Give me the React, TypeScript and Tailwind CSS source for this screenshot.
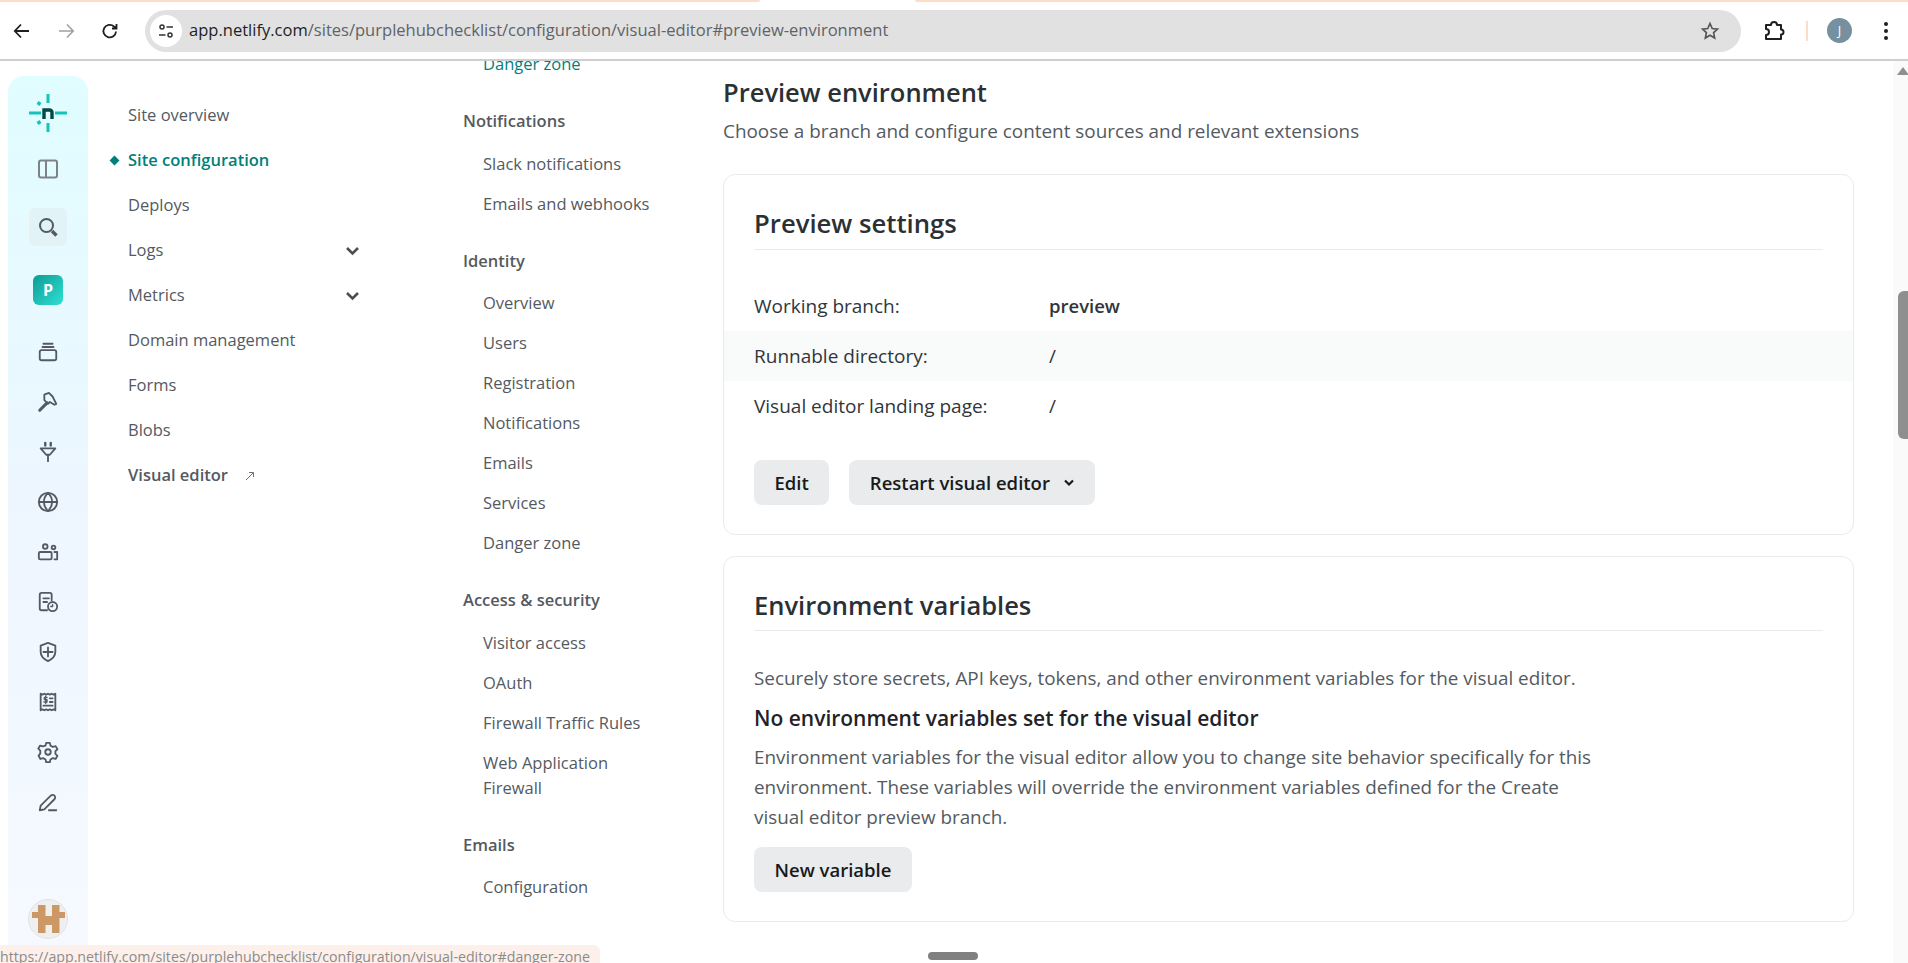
import React from "react";

const font = { fontFamily: '"Open Sans", sans-serif' };

function SI({ children, vb = "0 0 24 24" }: { children: React.ReactNode; vb?: string }) {
  return (
    <svg width="22" height="22" viewBox={vb} fill="none" stroke="#545a61" strokeWidth="2" strokeLinecap="round" strokeLinejoin="round">
      {children}
    </svg>
  );
}

const railIcons: React.ReactNode[] = [
  <SI key="stack"><rect x="3" y="10" width="18" height="11" rx="2" /><path d="M6 6.5h12M7 3h10" /></SI>,
  <SI key="hammer"><path d="M3 21l8-8" strokeWidth="3.4" /><path d="M8 4l5-2 4 4 4 8-2 1-5-3-2 2-4-4z" /></SI>,
  <SI key="plug"><path d="M9 2v3M15 2v3" strokeWidth="2.6" /><path d="M4 8h16l-6 7h-4zM12 15v7" /></SI>,
  <SI key="globe"><circle cx="12" cy="12" r="10" /><path d="M2 12h20M12 2c-6 6-6 14 0 20M12 2c6 6 6 14 0 20" /></SI>,
  <SI key="users"><circle cx="9" cy="6" r="2.5" /><circle cx="18" cy="7" r="2" /><rect x="2" y="12" width="14" height="8" rx="1.5" /><path d="M19 12h3v8h-3" /></SI>,
  <SI key="doc"><path d="M11 21H5a2 2 0 0 1-2-2V4a2 2 0 0 1 2-2h9a2 2 0 0 1 2 2v6M7 8h6M7 12h4" /><circle cx="17" cy="17" r="5" /><path d="M17 15v2h-2" strokeWidth="1.6" /></SI>,
  <SI key="shield"><path d="M12 2l8 3v7c0 5-4 8-8 10-4-2-8-5-8-10V5z" /><path d="M12 7v10M7 12h10" /></SI>,
  <SI key="receipt"><path d="M4 3l2 1 2-1 2 1 2-1 2 1 2-1 2 1 2-1v18l-2-1-2 1-2-1-2 1-2-1-2 1-2-1-2 1z" /><path d="M14 8h3M14 12h3M7 16h10" /><path d="M11 7H8v2.500h3V12H7.500M9.500 5.500v8" strokeWidth="1.400" /></SI>,
  <SI key="gear"><circle cx="12" cy="12" r="3" /><path d="M10 2h4l.7 3 2.600 1.500 3-.9 2 3.400-2.200 2.100v3l2.200 2.100-2 3.400-3-.9-2.600 1.500-.7 3h-4l-.7-3-2.600-1.500-3 .9-2-3.400L3.600 13.500v-3L1.400 8.400l2-3.400 3 .9L9.300 5z" /></SI>,
  <SI key="pen"><path d="M3 21l1-5L15 5a2.600 2.600 0 0 1 4 4L8 20zM13 21h8" /></SI>,
];

function Rail() {
  return (
    <div className="w-20 ml-2 mt-[15px] shrink-0 rounded-t-2xl bg-gradient-to-b from-[#e0fdff] via-[#eef6ff] to-[#f6faff] flex flex-col items-center">
      <svg className="mt-[16px]" width="42" height="42" viewBox="0 0 42 42" fill="none">
        <g stroke="#14c4bc" strokeWidth="3">
          <path d="M21 2v9M21 31v9M2 21h12M28 21h12" />
          <path d="M10.500 10.500l3 2M13.500 29.500l-3 2" strokeWidth="3.400" />
        </g>
        <path d="M17 27v-9h5.500a2.500 2.500 0 0 1 2.500 2.500V27" stroke="#014847" strokeWidth="3.400" />
      </svg>
      <div className="mt-[24px]">
        <svg width="22" height="22" viewBox="0 0 22 22" fill="none" stroke="#7d8288" strokeWidth="2"><rect x="2" y="2.500" width="18" height="17" rx="2" /><path d="M9 2.500v17" /></svg>
      </div>
      <div className="mt-[27px] w-10 h-10 rounded-lg bg-[#e2f3f7] border border-[#eef8fa] flex items-center justify-center">
        <svg width="22" height="22" viewBox="0 0 22 22" fill="none" stroke="#545a61" strokeWidth="2"><circle cx="9.500" cy="9.500" r="6.500" /><path d="M15 15l4.500 4.500" strokeWidth="3.400" /></svg>
      </div>
      <div className="mt-[28px] w-[30px] h-[30px] rounded-md bg-gradient-to-br from-[#0b9c94] to-[#2fe0d5] flex items-center justify-center text-white text-[16px] font-bold">P</div>
      <div className="mt-[22px] flex flex-col items-center">
        {railIcons.map((icon) => (
          <div key={(icon as React.ReactElement).key} className="h-[50px] flex items-center justify-center">{icon}</div>
        ))}
      </div>
      <div className="mt-[72px] w-10 h-10 rounded-full bg-[#efefef] border border-[#e2e2e2] flex items-center justify-center">
        <svg width="33" height="28" viewBox="0 0 33 28" fill="#cc9966"><path d="M6 0h7.500v11H20V0h7.500v7H33v6h-5.500v15H20v-8h-6.500v8H6V13H0V7h6z" /></svg>
      </div>
    </div>
  );
}

const mainNav = ["Site overview", "Site configuration", "Deploys", "Logs", "Metrics", "Domain management", "Forms", "Blobs", "Visual editor"];

function MainNav() {
  return (
    <div className="w-[375px] shrink-0 pl-10 pt-[32px] pr-[103px] flex flex-col">
      {mainNav.map((n) => (
        <div key={n} className={"relative h-[45px] flex items-center justify-between text-[16.500px] pl-0 " + (n === "Site configuration" ? "text-[#00807a] font-semibold" : n === "Visual editor" ? "text-[#545a61] font-semibold" : "text-[#545a61]")}>
          {n === "Site configuration" && <span className="absolute -left-[17px] top-[19px] w-[7px] h-[7px] rotate-45 bg-[#00807a]" />}
          <span className="flex items-center">
            {n}
            {n === "Visual editor" && (
              <svg className="ml-4" width="12" height="12" viewBox="0 0 12 12" fill="none" stroke="#6b7075" strokeWidth="1"><path d="M2 10l7-7M5 2.500h4.500V7" /></svg>
            )}
          </span>
          {(n === "Logs" || n === "Metrics") && (
            <svg width="15" height="10" viewBox="0 0 15 10" fill="none" stroke="#4a4f55" strokeWidth="2.600"><path d="M2 2l5.500 5.500L13 2" /></svg>
          )}
        </div>
      ))}
    </div>
  );
}

type Group = { title: string; items: string[] };
const groups: Group[] = [
  { title: "Notifications", items: ["Slack notifications", "Emails and webhooks"] },
  { title: "Identity", items: ["Overview", "Users", "Registration", "Notifications", "Emails", "Services", "Danger zone"] },
  { title: "Access & security", items: ["Visitor access", "OAuth", "Firewall Traffic Rules", "Web Application Firewall"] },
  { title: "Emails", items: ["Configuration"] },
];

function SubNav() {
  return (
    <div className="w-[260px] shrink-0 flex flex-col -mt-[10px] text-[16.500px]">
      <div className="pl-[20px] text-[#00807a] leading-[25px] h-[25px] mb-[11px]">Danger zone</div>
      {groups.map((g) => (
        <div key={g.title} className="mt-[21px] mb-[3.600px]">
          <div className="font-semibold text-[#545a61] text-[16.500px] leading-[25px] mb-[10px]">{g.title}</div>
          {g.items.map((i) => (
            <div key={i} className="pl-[20px] text-[#545a61] leading-[25px] py-[7.500px] w-[195px]">{i}</div>
          ))}
        </div>
      ))}
    </div>
  );
}

function Btn({ children }: { children: React.ReactNode }) {
  return <div className="h-[45px] px-[20.500px] rounded-lg bg-[#e9ebed] text-[#181a1c] font-semibold text-[18.500px] flex items-center">{children}</div>;
}

function Main() {
  return (
    <div className="w-[1131px] shrink-0 pt-[15px] text-[#30363b]">
      <h2 className="text-[25.500px] font-semibold leading-[32px] text-[#2b3035]">Preview environment</h2>
      <p className="mt-[9px] text-[18.900px] leading-[28px] text-[#545a61]">Choose a branch and configure content sources and relevant extensions</p>
      <section className="mt-[29px] h-[361px] rounded-xl border border-[#e9ebed] pt-[31px]">
        <div className="mx-[30px] border-b border-[#e9ebed] h-[44px]">
          <h3 className="text-[25.700px] font-semibold leading-[36px] text-[#2b3035]">Preview settings</h3>
        </div>
        <div className="mt-[31px] text-[19px] text-[#30363b]">
          <div className="h-[50px] px-[30px] flex items-center"><span className="w-[295px]">Working branch:</span><span className="font-semibold text-[18.500px]">preview</span></div>
          <div className="h-[50px] px-[30px] flex items-center bg-[#f9fafa]"><span className="w-[295px]">Runnable directory:</span><span>/</span></div>
          <div className="h-[50px] px-[30px] flex items-center"><span className="w-[295px]">Visual editor landing page:</span><span>/</span></div>
        </div>
        <div className="mt-[29px] mx-[30px] flex gap-5">
          <Btn>Edit</Btn>
          <Btn>
            Restart visual editor
            <svg className="ml-[13px]" width="12" height="8" viewBox="0 0 12 8" fill="none" stroke="#181a1c" strokeWidth="2.200"><path d="M2 1.500l4 4 4-4" /></svg>
          </Btn>
        </div>
      </section>
      <section className="mt-[21px] h-[366px] rounded-xl border border-[#e9ebed] pt-[30px]">
        <div className="mx-[30px] border-b border-[#e9ebed] h-[44px]">
          <h3 className="text-[25.500px] font-semibold leading-[36px] text-[#2b3035]">Environment variables</h3>
        </div>
        <div className="mx-[30px] mt-[32px] text-[18.850px] text-[#545a61] leading-[30px]">
          <p className="leading-[30px]">Securely store secrets, API keys, tokens, and other environment variables for the visual editor.</p>
          <p className="mt-[10px] text-[21px] font-semibold text-[#1f2327]">No environment variables set for the visual editor</p>
          <p className="mt-[9px] w-[855px]">Environment variables for the visual editor allow you to change site behavior specifically for this environment. These variables will override the environment variables defined for the Create visual editor preview branch.</p>
          <div className="mt-[15px] flex"><Btn>New variable</Btn></div>
        </div>
      </section>
    </div>
  );
}

export default function App() {
  return (
    <div className="relative h-[963px] w-[1908px] overflow-hidden bg-white flex flex-col" style={font}>
      <div className="h-[2px] shrink-0 flex">
        <div className="w-[760px] bg-[#fddcc8] rounded-br-sm" />
        <div className="w-[155px] bg-white" />
        <div className="flex-1 bg-[#fddcc8] rounded-bl-sm" />
      </div>
      <header className="h-[59px] shrink-0 border-b-2 border-[#cfcfcf] flex items-center pl-[12px] pr-[12px]">
        <svg width="20" height="20" viewBox="0 0 20 20" fill="none" stroke="#1f1f1f" strokeWidth="1.800"><path d="M17 10H3M9 3.500L2.800 10 9 16.500" /></svg>
        <svg className="ml-6" width="20" height="20" viewBox="0 0 20 20" fill="none" stroke="#a0a0a0" strokeWidth="1.600"><path d="M3 10h14M11 3.500L17.200 10 11 16.500" /></svg>
        <svg className="ml-6" width="20" height="20" viewBox="0 0 20 20" fill="none" stroke="#1f1f1f" strokeWidth="1.800"><path d="M16 10.500A6.300 6.300 0 1 1 14 5.500L16.500 7.500M16.500 3v4.500H12" /></svg>
        <div className="ml-[25px] w-[1596px] h-[42px] rounded-full bg-[#e1e1e1] flex items-center pl-[5px] pr-[21px]">
          <div className="w-[32px] h-[32px] rounded-full bg-white flex items-center justify-center shrink-0">
            <svg width="18" height="18" viewBox="0 0 18 18" fill="none" stroke="#333" strokeWidth="1.500"><circle cx="5" cy="5" r="2" /><path d="M9.500 5H16M2 13h6.500" /><circle cx="13" cy="13" r="2" /></svg>
          </div>
          <span className="ml-[7px] text-[16.550px] text-[#5f6368] flex-1 whitespace-nowrap"><span className="text-[#1f1f1f]">app.netlify.com</span>/sites/purplehubchecklist/configuration/visual-editor#preview-environment</span>
          <svg width="20" height="20" viewBox="0 0 24 24" fill="none" stroke="#555" strokeWidth="2"><path d="M12 3l2.700 6 6.300.7-4.700 4.300 1.300 6.400L12 17.200 6.400 20.400 7.700 14 3 9.700 9.300 9z" /></svg>
        </div>
        <svg className="ml-[22px]" width="22" height="22" viewBox="0 0 22 22" fill="none" stroke="#1f1f1f" strokeWidth="2" strokeLinejoin="round"><path d="M3 5h5a3 3 0 0 1 6 0h4v4.500a2.500 2.500 0 0 1 0 5V19H3v-4a3 3 0 0 0 0-6z" /></svg>
        <div className="ml-[21px] w-[2px] h-5 bg-[#fddcc8]" />
        <div className="ml-[19px] w-[25px] h-[25px] rounded-full bg-[#76909f] text-white text-[13px] flex items-center justify-center">J</div>
        <svg className="ml-[31px]" width="6" height="20" viewBox="0 0 6 20" fill="#1f1f1f"><circle cx="3" cy="3" r="2" /><circle cx="3" cy="10" r="2" /><circle cx="3" cy="17" r="2" /></svg>
      </header>
      <div className="flex-1 flex min-h-0 overflow-hidden">
        <Rail />
        <MainNav />
        <SubNav />
        <Main />
        <div className="ml-auto w-[15px] bg-[#fafafa] flex flex-col items-end relative">
          <div className="absolute left-[4px] top-[6px] w-0 h-0 border-x-[6px] border-x-transparent border-b-[8px] border-b-[#8f8f8f]" />
          <div className="mt-[230px] w-[10px] h-[148px] rounded-l-md bg-[#8f8f8f]" />
        </div>
      </div>
      <div className="absolute left-0 bottom-0 w-[600px] h-[18px] rounded-tr-md bg-[#fdf0ea] text-[14.200px] leading-[24px] text-[#8b8b8b] pl-0 overflow-hidden whitespace-nowrap">https://app.netlify.com/sites/purplehubchecklist/configuration/visual-editor#danger-zone</div>
      <div className="absolute left-[928px] top-[952px] w-[50px] h-[8px] rounded-full bg-[#808080]" />
    </div>
  );
}
